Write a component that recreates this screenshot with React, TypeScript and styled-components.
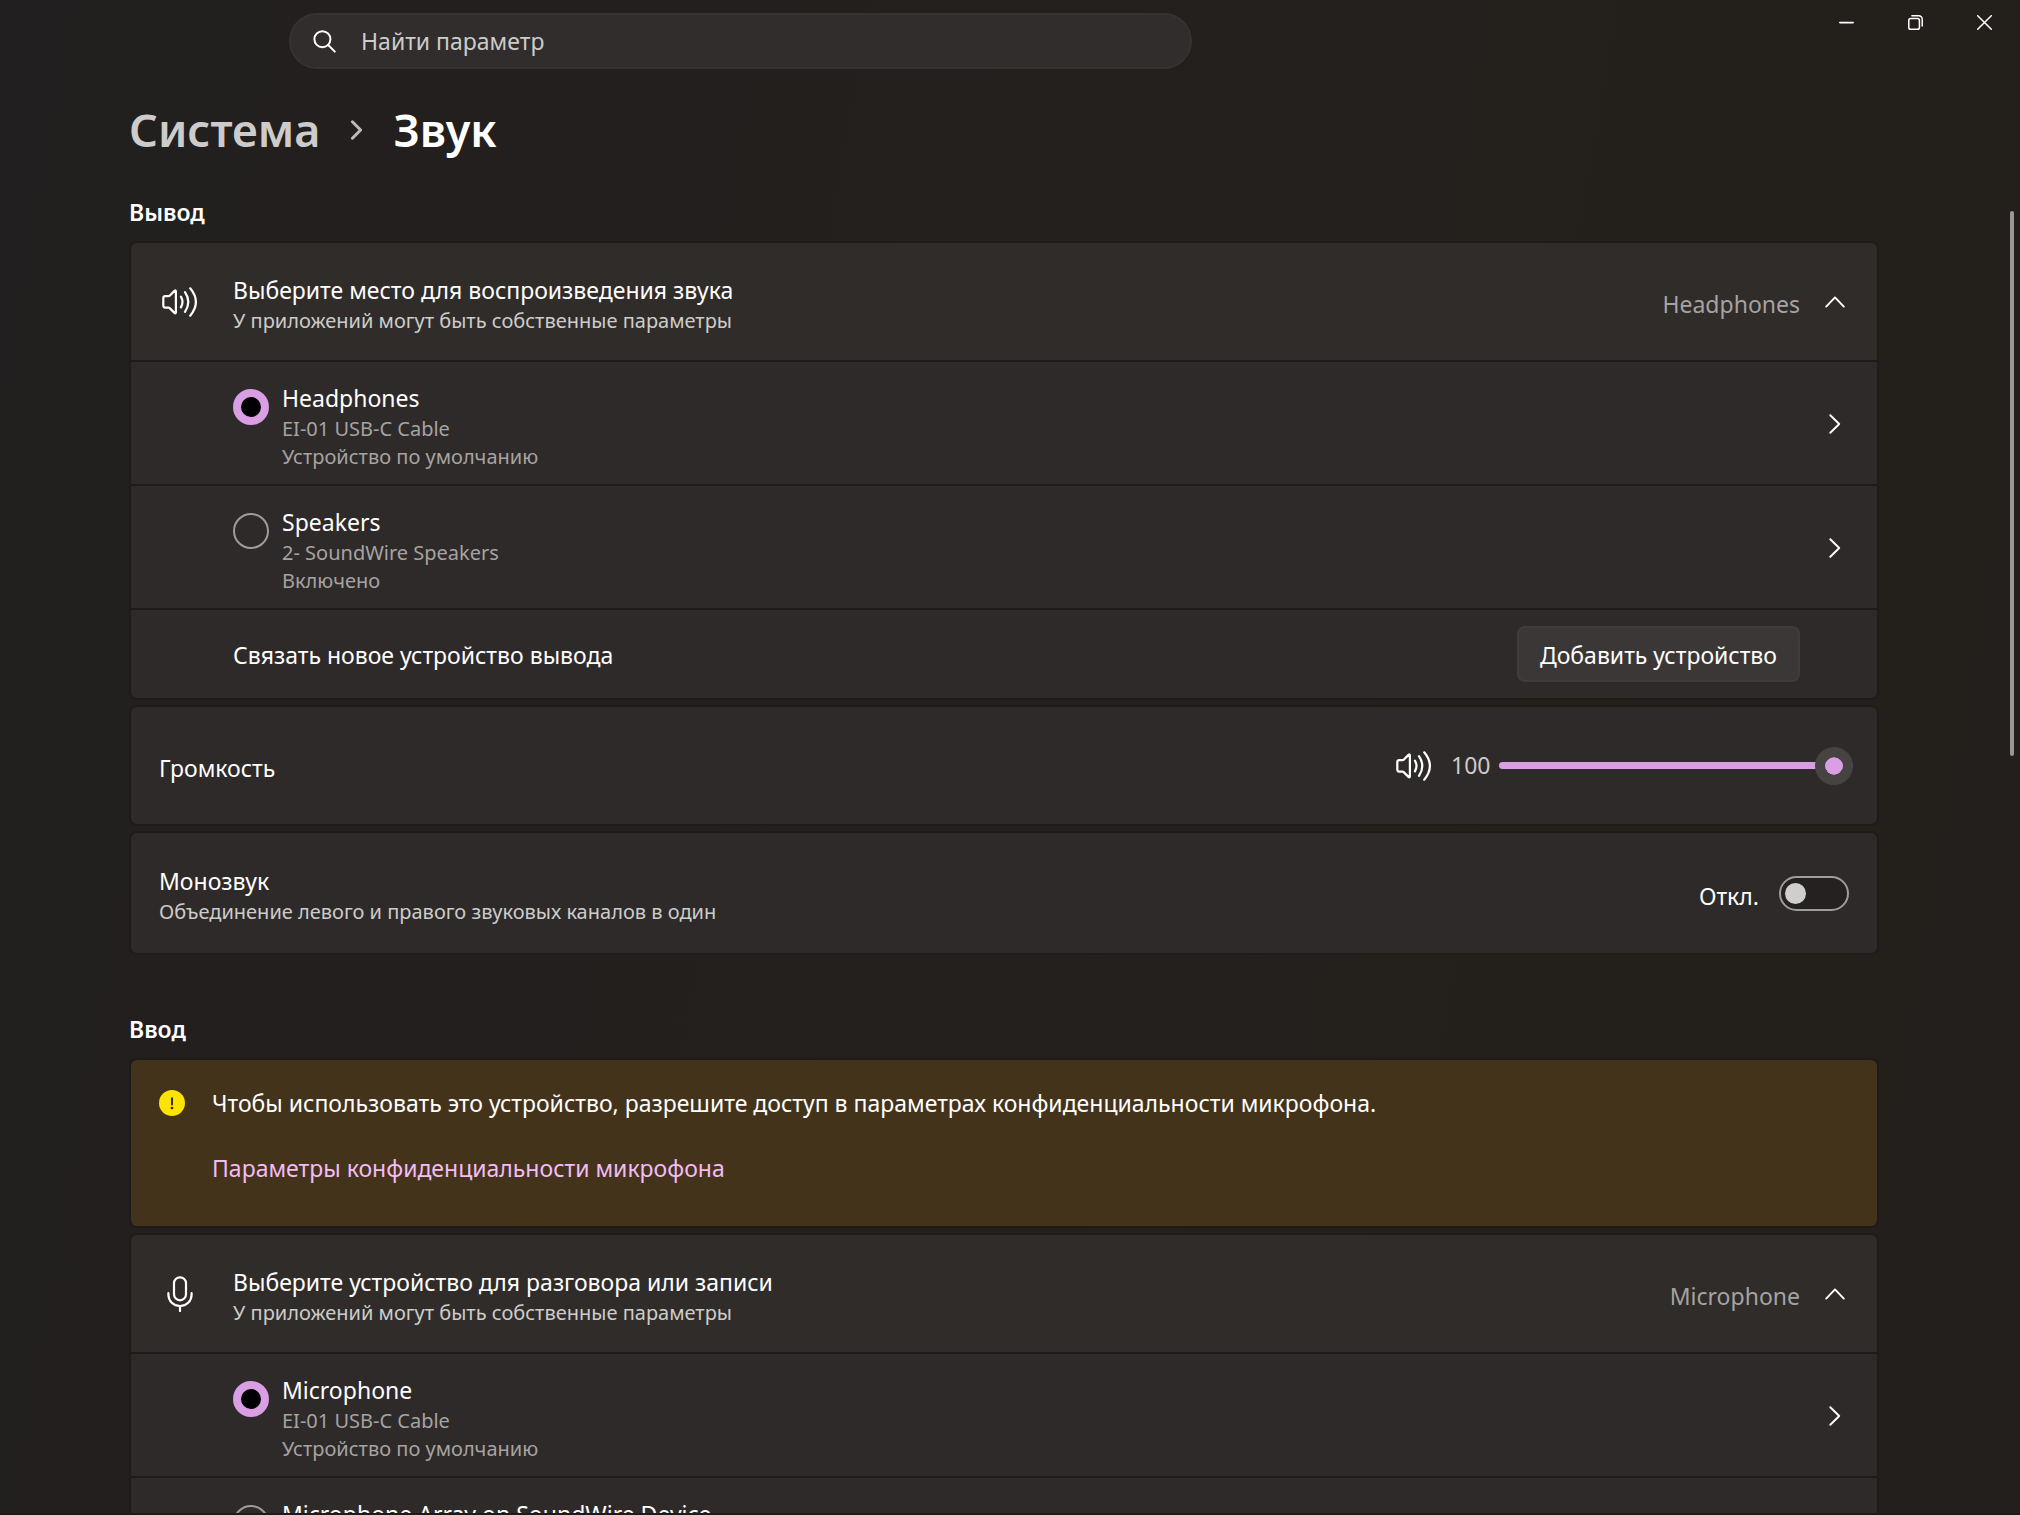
import React, { useId, useState } from 'react';
import styled, { createGlobalStyle } from 'styled-components';

const color = {
  page: '#231f1d',
  edge: '#201b19',
  card: '#2e2a29',
  cardHeader: '#302c2a',
  field: '#302d2c',
  fieldBorder: '#363231',
  button: '#3b3736',
  buttonBorder: '#403c3a',
  warning: '#43331a',
  text: '#ffffff',
  textSoft: '#cdcccb',
  textMuted: '#a6a3a2',
  accent: '#d99ee4',
  link: '#f3bcf5',
};

const GlobalStyle = createGlobalStyle`
  *, *::before, *::after { box-sizing: border-box; }
  body {
    margin: 0;
    background: ${color.page};
    color: ${color.text};
    font-family: "Noto Sans", "Open Sans", sans-serif;
    font-size: 23px;
    line-height: 32px;
  }
  button, input { font: inherit; color: inherit; }
  h1, h2, p, ul { margin: 0; padding: 0; }
  ul { list-style: none; }
  svg { display: block; flex: none; }
`;

const Window = styled.div`
  display: flex;
  flex-direction: column;
  height: 100vh;
  overflow: hidden;
  background: linear-gradient(100deg, #221f20 0%, #231f1e 30%, #23201c 75%, #231f1c 100%);
  border-bottom: 2px solid ${color.edge};
`;

const TitleBar = styled.header`
  display: grid;
  grid-template-columns: minmax(0, 1fr) auto;
  align-items: start;
  flex: none;
  height: 82px;
  padding-right: 1px;
`;

const SearchBox = styled.label`
  display: flex;
  align-items: center;
  gap: 25px;
  width: 52%;
  max-width: 903px;
  height: 56px;
  margin: 13px 0 0 289px;
  padding: 0 22px;
  border: 2px solid ${color.fieldBorder};
  border-radius: 28px;
  background: ${color.field};
`;

const SearchInput = styled.input`
  flex: 1;
  min-width: 0;
  padding: 0;
  border: 0;
  outline: 0;
  background: transparent;
  &::placeholder { color: ${color.textSoft}; opacity: 1; }
`;

const WindowControls = styled.div`
  display: flex;
`;

const WindowButton = styled.button`
  display: grid;
  place-items: center;
  width: 69px;
  height: 45px;
  padding: 0;
  border: 0;
  background: transparent;
`;

const Body = styled.div`
  display: grid;
  grid-template-columns: minmax(0, 1fr) 12px;
  flex: 1;
  min-height: 0;
`;

const Content = styled.main`
  width: 100%;
  max-width: 1750px;
  min-height: 0;
  margin: 0 auto;
  padding-top: 18px;
`;

const ScrollRail = styled.div`
  padding: 129px 0 0 2px;
`;

const ScrollThumb = styled.div`
  width: 4px;
  height: 36vh;
  border-radius: 2px;
  background: #9a9796;
`;

const Breadcrumb = styled.nav`
  display: flex;
  align-items: center;
  gap: 30px;
  height: 60px;
  font-size: 45px;
  line-height: 60px;
  font-weight: 600;
`;

const BreadcrumbLink = styled.a`
  color: ${color.textSoft};
  text-decoration: none;
`;

const PageTitle = styled.h1`
  font-size: inherit;
  font-weight: inherit;
`;

const Section = styled.section`
  display: flex;
  flex-direction: column;
  gap: 5px;
  padding-top: 36px;
  & + & { padding-top: 58px; }
`;

const SectionTitle = styled.h2`
  padding-bottom: 8px;
  font-size: 23px;
  line-height: 32px;
  font-weight: 600;
`;

const Card = styled.div`
  overflow: hidden;
  border: 2px solid ${color.edge};
  border-radius: 8px;
  background: ${color.card};
`;

const SettingRow = styled.div<{ $tall?: boolean }>`
  display: flex;
  align-items: center;
  justify-content: space-between;
  min-height: ${(p) => (p.$tall ? 120 : 117)}px;
  padding: 0 24px 0 28px;
`;

const ExpanderHeader = styled.button`
  display: grid;
  grid-template-columns: 36px minmax(0, 1fr) auto 20px;
  align-items: center;
  width: 100%;
  min-height: 117px;
  padding: 0 32px 0 31px;
  border: 0;
  background: ${color.cardHeader};
  text-align: left;
`;

const ExpanderIcon = styled.span`
  display: grid;
  place-items: center;
`;

const ExpanderLabel = styled.span`
  padding-left: 35px;
`;

const ExpanderValue = styled.span`
  padding: 5px 25px 0 0;
  color: ${color.textMuted};
`;

const TextBlock = styled.span`
  display: block;
  padding-top: 5px;
`;

const Title = styled.span`
  display: block;
`;

const Caption = styled.span<{ $muted?: boolean }>`
  display: block;
  font-size: 20px;
  line-height: 28px;
  color: ${(p) => (p.$muted ? color.textMuted : color.textSoft)};
  ${Title} + & { padding-top: 1px; }
`;

const DeviceRow = styled.li`
  display: flex;
  align-items: center;
  justify-content: space-between;
  min-height: 124px;
  border-top: 2px solid ${color.edge};
  padding: 20px 32px 13px 102px;
`;

const DeviceLabel = styled.label`
  display: flex;
  align-items: flex-start;
  align-self: flex-start;
  gap: 13px;
`;

const Radio = styled.input`
  appearance: none;
  flex: none;
  width: 36px;
  height: 36px;
  margin: 7px 0 0;
  border: 2px solid #9f9c9b;
  border-radius: 50%;
  &:checked {
    border: 8px solid ${color.accent};
    background: #000000;
  }
`;

const DetailsButton = styled.button`
  display: grid;
  place-items: center;
  width: 20px;
  height: 32px;
  margin-bottom: 6px;
  padding: 0;
  border: 0;
  background: transparent;
`;

const PairRow = styled.li`
  display: flex;
  align-items: center;
  justify-content: space-between;
  min-height: 90px;
  border-top: 2px solid ${color.edge};
  padding: 0 77px 0 102px;
`;

const PairText = styled.span`
  padding-top: 2px;
`;

const PushButton = styled.button`
  height: 56px;
  padding: 2px 21px 0;
  border: 2px solid ${color.buttonBorder};
  border-radius: 8px;
  background: ${color.button};
`;

const VolumeControl = styled.div`
  display: flex;
  align-items: center;
`;

const VolumeValue = styled.output`
  width: 67px;
  padding: 0 0 2px 19px;
  color: ${color.textSoft};
`;

const Slider = styled.input`
  appearance: none;
  width: 354px;
  height: 39px;
  margin: 0;
  background: transparent;
  &::-webkit-slider-runnable-track {
    height: 7px;
    border-radius: 4px;
    background: linear-gradient(
      to right,
      ${color.accent} var(--filled),
      #9f9c9b var(--filled)
    );
  }
  &::-webkit-slider-thumb {
    appearance: none;
    width: 38px;
    height: 38px;
    margin-top: -15px;
    border: 10px solid #454443;
    border-radius: 50%;
    background: ${color.accent};
    background-clip: padding-box;
  }
`;

const SwitchLabel = styled.label`
  display: flex;
  align-items: center;
  gap: 20px;
  padding-right: 4px;
`;

const Switch = styled.input`
  appearance: none;
  display: flex;
  align-items: center;
  width: 70px;
  height: 35px;
  margin: 0;
  padding: 0 4px;
  border: 2px solid #9f9c9b;
  border-radius: 18px;
  background: #252120;
  &::before {
    content: "";
    width: 21px;
    height: 21px;
    border-radius: 50%;
    background: #cfcecd;
  }
  &:checked { justify-content: flex-end; }
`;

const Warning = styled(Card)`
  display: grid;
  grid-template-columns: 26px minmax(0, 1fr);
  align-items: start;
  column-gap: 27px;
  padding: 27px 28px 42px;
  background: ${color.warning};
`;

const WarningIcon = styled.span`
  padding-top: 3px;
`;

const WarningText = styled.div`
  display: grid;
  justify-items: start;
  gap: 33px;
`;

const TextLink = styled.a`
  color: ${color.link};
  text-decoration: none;
`;

const stroke = {
  fill: 'none',
  stroke: 'currentColor',
  strokeLinecap: 'round',
  strokeLinejoin: 'round',
} as const;

const SearchIcon = () => (
  <svg width="23" height="24" viewBox="0 0 23 24" {...stroke} strokeWidth="2">
    <circle cx="9.4" cy="10.2" r="8" />
    <path d="M15.2 16l6.6 6.6" />
  </svg>
);

const SpeakerIcon = () => (
  <svg width="36" height="30" viewBox="0 0 36 30" {...stroke} strokeWidth="2.2">
    <path d="M1.3 11.2q0-2 2-2h3.2q.7 0 1.2-.5l4.8-4.8q1.4-1.2 1.4.6v20.8q0 1.8-1.4.6l-4.8-4.8q-.5-.5-1.2-.5H3.3q-2 0-2-2z" />
    <path d="M18.9 9.6q3.2 5.4 0 10.8M23 5.2q6.6 9.8 0 19.6M28.2 1.3q11.4 13.7 0 27.4" />
  </svg>
);

const MicrophoneIcon = () => (
  <svg width="26" height="36" viewBox="0 0 26 36" {...stroke} strokeWidth="2.2">
    <rect x="7" y="1.3" width="12" height="23" rx="6" />
    <path d="M1.4 17.2v1.6a11.6 11.2 0 0 0 23.2 0v-1.6M13 30v5" />
  </svg>
);

const ChevronUp = () => (
  <svg width="20" height="12" viewBox="0 0 20 12" {...stroke} strokeWidth="1.9">
    <path d="M1.2 10.6L10 1.4l8.8 9.2" />
  </svg>
);

const ChevronRight = () => (
  <svg width="12" height="20" viewBox="0 0 12 20" {...stroke} strokeWidth="1.9">
    <path d="M1.3 1.2L10.2 10l-8.9 8.8" />
  </svg>
);

const CrumbChevron = () => (
  <svg width="13" height="22" viewBox="0 0 13 22" {...stroke} stroke="#bdbbba" strokeWidth="3">
    <path d="M2.4 2.8l8.2 8.2-8.2 8.2" />
  </svg>
);

const AlertIcon = () => (
  <svg width="26" height="26" viewBox="0 0 26 26">
    <circle cx="13" cy="13" r="13" fill="#fde300" />
    <path d="M13 8.2v6.4" stroke="#2b2412" strokeWidth="1.9" strokeLinecap="round" />
    <circle cx="13" cy="18" r="1.3" fill="#2b2412" />
  </svg>
);

const MinimizeIcon = () => (
  <svg width="15" height="15" viewBox="0 0 15 15" {...stroke} strokeWidth="1.6">
    <path d="M.8 7.6h13.4" />
  </svg>
);

const RestoreIcon = () => (
  <svg width="15" height="15" viewBox="0 0 15 15" {...stroke} strokeWidth="1.5">
    <rect x=".8" y="3.6" width="10.6" height="10.6" rx="1.8" />
    <path d="M3.9.8h6.9a3.4 3.4 0 0 1 3.4 3.4v6.9" />
  </svg>
);

const CloseIcon = () => (
  <svg width="15" height="15" viewBox="0 0 15 15" {...stroke} strokeWidth="1.5">
    <path d="M.7.7l13.6 13.6M14.3.7L.7 14.3" />
  </svg>
);

type Device = { name: string; details: string[] };

type DeviceListProps = {
  icon: React.ReactNode;
  title: string;
  devices: Device[];
  children?: React.ReactNode;
};

function DeviceExpander({ icon, title, devices, children }: DeviceListProps) {
  const id = useId();
  const [open, setOpen] = useState(true);
  const [selected, setSelected] = useState(0);

  return (
    <Card>
      <ExpanderHeader type="button" aria-expanded={open} onClick={() => setOpen(!open)}>
        <ExpanderIcon>{icon}</ExpanderIcon>
        <ExpanderLabel>
          <TextBlock>
            <Title>{title}</Title>
            <Caption>У приложений могут быть собственные параметры</Caption>
          </TextBlock>
        </ExpanderLabel>
        <ExpanderValue>{devices[selected].name}</ExpanderValue>
        <ChevronUp />
      </ExpanderHeader>
      {open && (
        <ul>
          {devices.map((device, index) => (
            <DeviceRow key={device.name}>
              <DeviceLabel htmlFor={`${id}-${index}`}>
                <Radio
                  type="radio"
                  id={`${id}-${index}`}
                  name={id}
                  checked={index === selected}
                  onChange={() => setSelected(index)}
                />
                <span>
                  <Title>{device.name}</Title>
                  {device.details.map((line) => (
                    <Caption key={line} $muted>{line}</Caption>
                  ))}
                </span>
              </DeviceLabel>
              <DetailsButton type="button" aria-label={device.name}>
                <ChevronRight />
              </DetailsButton>
            </DeviceRow>
          ))}
          {children}
        </ul>
      )}
    </Card>
  );
}

const outputs: Device[] = [
  { name: 'Headphones', details: ['EI-01 USB-C Cable', 'Устройство по умолчанию'] },
  { name: 'Speakers', details: ['2- SoundWire Speakers', 'Включено'] },
];

const inputs: Device[] = [
  { name: 'Microphone', details: ['EI-01 USB-C Cable', 'Устройство по умолчанию'] },
  { name: 'Microphone Array on SoundWire Device', details: [] },
];

export default function App() {
  const [volume, setVolume] = useState(100);
  const [mono, setMono] = useState(false);

  return (
    <>
      <GlobalStyle />
      <Window>
        <TitleBar>
          <SearchBox>
            <SearchIcon />
            <SearchInput type="search" placeholder="Найти параметр" aria-label="Найти параметр" />
          </SearchBox>
          <WindowControls>
            <WindowButton type="button" aria-label="Свернуть"><MinimizeIcon /></WindowButton>
            <WindowButton type="button" aria-label="Восстановить"><RestoreIcon /></WindowButton>
            <WindowButton type="button" aria-label="Закрыть"><CloseIcon /></WindowButton>
          </WindowControls>
        </TitleBar>
        <Body>
          <Content>
            <Breadcrumb>
              <BreadcrumbLink href="#system">Система</BreadcrumbLink>
              <CrumbChevron />
              <PageTitle>Звук</PageTitle>
            </Breadcrumb>

            <Section>
              <SectionTitle>Вывод</SectionTitle>
              <DeviceExpander
                icon={<SpeakerIcon />}
                title="Выберите место для воспроизведения звука"
                devices={outputs}
              >
                <PairRow>
                  <PairText>Связать новое устройство вывода</PairText>
                  <PushButton type="button">Добавить устройство</PushButton>
                </PairRow>
              </DeviceExpander>
              <Card>
                <SettingRow>
                  <TextBlock as="label" htmlFor="volume">Громкость</TextBlock>
                  <VolumeControl>
                    <SpeakerIcon />
                    <VolumeValue htmlFor="volume">{volume}</VolumeValue>
                    <Slider
                      type="range"
                      id="volume"
                      min={0}
                      max={100}
                      value={volume}
                      onChange={(e) => setVolume(Number(e.target.value))}
                      style={{ '--filled': `${volume}%` } as React.CSSProperties}
                    />
                  </VolumeControl>
                </SettingRow>
              </Card>
              <Card>
                <SettingRow $tall>
                  <TextBlock>
                    <Title>Монозвук</Title>
                    <Caption>Объединение левого и правого звуковых каналов в один</Caption>
                  </TextBlock>
                  <SwitchLabel>
                    <TextBlock>{mono ? 'Вкл.' : 'Откл.'}</TextBlock>
                    <Switch
                      type="checkbox"
                      role="switch"
                      checked={mono}
                      onChange={(e) => setMono(e.target.checked)}
                    />
                  </SwitchLabel>
                </SettingRow>
              </Card>
            </Section>

            <Section>
              <SectionTitle>Ввод</SectionTitle>
              <Warning>
                <WarningIcon><AlertIcon /></WarningIcon>
                <WarningText>
                  <p>Чтобы использовать это устройство, разрешите доступ в параметрах конфиденциальности микрофона.</p>
                  <TextLink href="#microphone-privacy">Параметры конфиденциальности микрофона</TextLink>
                </WarningText>
              </Warning>
              <DeviceExpander
                icon={<MicrophoneIcon />}
                title="Выберите устройство для разговора или записи"
                devices={inputs}
              />
            </Section>
          </Content>
          <ScrollRail>
            <ScrollThumb />
          </ScrollRail>
        </Body>
      </Window>
    </>
  );
}
